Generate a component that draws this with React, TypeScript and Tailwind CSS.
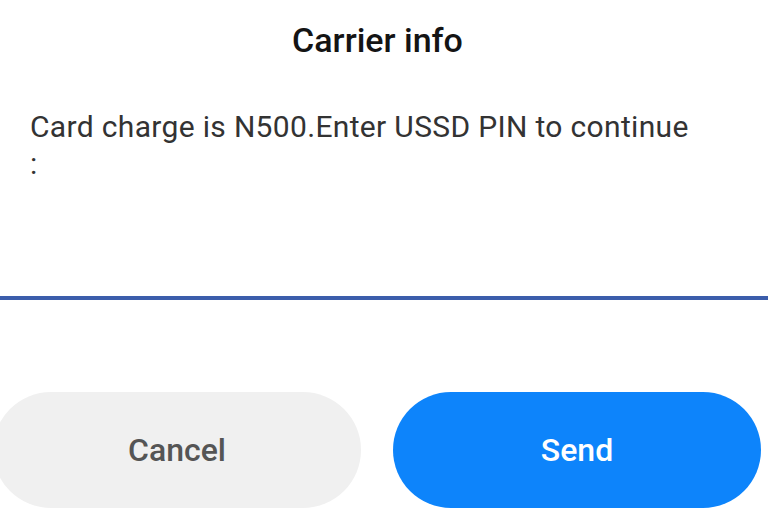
export default function App() {
  return (
    <div className="w-[768px] h-[511px] overflow-hidden bg-white" style={{ fontFamily: 'Roboto, "Noto Sans", sans-serif' }}>
      <div className="pt-[20px] pr-[13px] h-[61px] text-center text-[34px] leading-[40px] font-medium text-[#141414]">Carrier info</div>
      <div className="mt-[47px] ml-[30px] pr-[20px] text-[30px] leading-[37px] tracking-[0.33px] text-[#333333]">
        <div>Card charge is N500.Enter USSD PIN to continue</div>
        <div>:</div>
      </div>
      <div className="mt-[114px] h-[4px] bg-[#3b5dab]" />
      <div className="mt-[92px] ml-[-7px] flex gap-[32px]">
        <button className="w-[368px] h-[116px] rounded-full bg-[#f0f0f0] text-[32px] font-medium text-[#555555]">Cancel</button>
        <button className="w-[368px] h-[116px] rounded-full bg-[#0d84fb] text-[32px] font-medium text-white">Send</button>
      </div>
    </div>
  );
}
